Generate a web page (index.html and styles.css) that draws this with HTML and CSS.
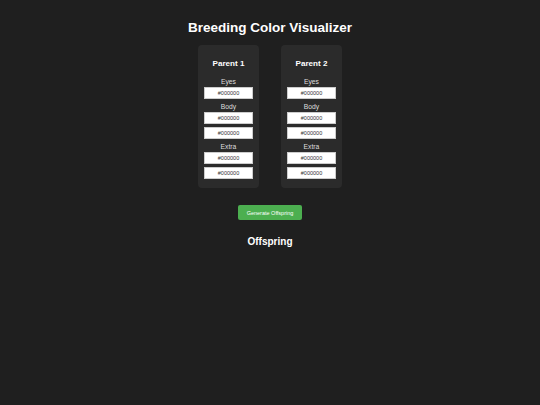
FILE: index.html
```html
<!DOCTYPE html>
<html lang="en">
<head>
    <meta charset="UTF-8">
    <meta name="viewport" content="width=device-width, initial-scale=1.0">
    <title>Breeding Color Visualizer</title>
    <link rel="stylesheet" href="styles.css">
</head>
<body>
    <h1>Breeding Color Visualizer</h1>

    <!-- Parents -->
    <div class="parents">
        <div class="parent">
            <h3>Parent 1</h3>
            <label>Eyes</label>
            <input type="text" value="#000000">
            <label>Body</label>
            <input type="text" value="#000000">
            <input type="text" value="#000000">
            <label>Extra</label>
            <input type="text" value="#000000">
            <input type="text" value="#000000">
        </div>
        <div class="parent">
            <h3>Parent 2</h3>
            <label>Eyes</label>
            <input type="text" value="#000000">
            <label>Body</label>
            <input type="text" value="#000000">
            <input type="text" value="#000000">
            <label>Extra</label>
            <input type="text" value="#000000">
            <input type="text" value="#000000">
        </div>
    </div>

    <button class="generate">Generate Offspring</button>

    <h2>Offspring</h2>
    <div class="offspring" id="offspring"></div>
</body>
</html>
```

FILE: styles.css
```css
body {
    font-family: 'Liberation Sans', Arial, sans-serif;
    background-color: #1f1f1f;
    color: #ffffff;
    text-align: center;
    margin: 0;
    padding: 0;
}
h1 {
    font-size: 13.5px;
    line-height: 16px;
    margin: 20px 0 9px;
}
.parents {
    display: flex;
    justify-content: center;
    gap: 22px;
}
.parent {
    display: flex;
    flex-direction: column;
    align-items: center;
    width: 49px;
    padding: 6px;
    background-color: #2b2b2b;
    border-radius: 4px;
}
.parent h3 {
    font-size: 8.1px;
    line-height: 12px;
    margin: 7px 0;
}
.parent label {
    font-size: 6.75px;
    line-height: 10px;
    color: #dddddd;
}
.parent input {
    box-sizing: border-box;
    width: 49px;
    height: 12px;
    margin: 0 0 3px;
    padding: 0;
    border: 1px solid #cccccc;
    background-color: #ffffff;
    color: #333333;
    font-family: 'Liberation Sans', Arial, sans-serif;
    font-size: 5.5px;
    text-align: center;
}
button.generate {
    margin-top: 17px;
    height: 15px;
    padding: 0 9px;
    border: none;
    border-radius: 2px;
    background-color: #4caf50;
    color: white;
    font-family: 'Liberation Sans', Arial, sans-serif;
    font-size: 5.5px;
    cursor: pointer;
}
h2 {
    font-size: 10px;
    line-height: 12px;
    margin: 16px 0 0;
}
```
